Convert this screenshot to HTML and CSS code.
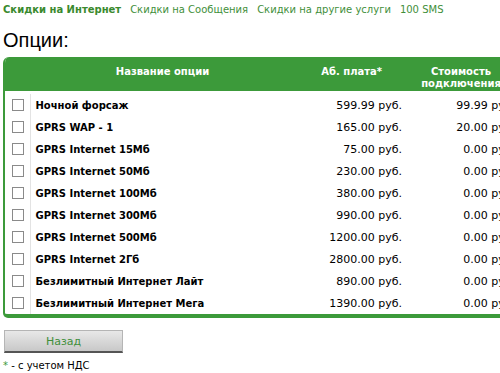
FILE: index.html
```html
<!DOCTYPE html>
<html lang="ru">
<head>
    <meta charset="UTF-8">
    <title>Опции</title>
    <link rel="stylesheet" href="styles.css">
</head>
<body>
    <div class="tabs">
        <a class="tab active" href="#">Скидки на Интернет</a>
        <a class="tab" href="#">Скидки на Сообщения</a>
        <a class="tab" href="#">Скидки на другие услуги</a>
        <a class="tab" href="#">100 SMS</a>
    </div>

    <h1>Опции:</h1>

    <div class="options-box">
        <table class="options">
            <colgroup>
                <col class="w-check">
                <col class="w-name">
                <col class="w-fee">
                <col class="w-conn">
            </colgroup>
            <thead>
                <tr>
                    <th class="col-check"></th>
                    <th class="col-name">Название опции</th>
                    <th class="col-fee">Аб. плата*</th>
                    <th class="col-conn">Стоимость подключения</th>
                </tr>
            </thead>
            <tbody>
                <tr><td class="col-check"><span class="box"></span></td><td class="col-name">Ночной форсаж</td><td class="col-fee">599.99 руб.</td><td class="col-conn">99.99 руб.</td></tr>
                <tr><td class="col-check"><span class="box"></span></td><td class="col-name">GPRS WAP - 1</td><td class="col-fee">165.00 руб.</td><td class="col-conn">20.00 руб.</td></tr>
                <tr><td class="col-check"><span class="box"></span></td><td class="col-name">GPRS Internet 15Мб</td><td class="col-fee">75.00 руб.</td><td class="col-conn">0.00 руб.</td></tr>
                <tr><td class="col-check"><span class="box"></span></td><td class="col-name">GPRS Internet 50Мб</td><td class="col-fee">230.00 руб.</td><td class="col-conn">0.00 руб.</td></tr>
                <tr><td class="col-check"><span class="box"></span></td><td class="col-name">GPRS Internet 100Мб</td><td class="col-fee">380.00 руб.</td><td class="col-conn">0.00 руб.</td></tr>
                <tr><td class="col-check"><span class="box"></span></td><td class="col-name">GPRS Internet 300Мб</td><td class="col-fee">990.00 руб.</td><td class="col-conn">0.00 руб.</td></tr>
                <tr><td class="col-check"><span class="box"></span></td><td class="col-name">GPRS Internet 500Мб</td><td class="col-fee">1200.00 руб.</td><td class="col-conn">0.00 руб.</td></tr>
                <tr><td class="col-check"><span class="box"></span></td><td class="col-name">GPRS Internet 2Гб</td><td class="col-fee">2800.00 руб.</td><td class="col-conn">0.00 руб.</td></tr>
                <tr><td class="col-check"><span class="box"></span></td><td class="col-name">Безлимитный Интернет Лайт</td><td class="col-fee">890.00 руб.</td><td class="col-conn">0.00 руб.</td></tr>
                <tr><td class="col-check"><span class="box"></span></td><td class="col-name">Безлимитный Интернет Мега</td><td class="col-fee">1390.00 руб.</td><td class="col-conn">0.00 руб.</td></tr>
            </tbody>
        </table>
    </div>

    <button class="back-btn">Назад</button>

    <div class="note"><span class="star">*</span> - с учетом НДС</div>
</body>
</html>
```

FILE: styles.css
```css
html {
    overflow: hidden;
}
body {
    font-family: "DejaVu Sans", Verdana, sans-serif;
    font-size: 10px;
    color: #000;
    background: #fff;
    margin: 0;
    padding: 3px 0 0 3px;
    width: 560px;
    overflow: hidden;
}
.tabs {
    display: flex;
    gap: 9px;
    height: 14px;
    line-height: 14px;
}
.tab {
    color: #3f8f3a;
    text-decoration: none;
}
.tab.active {
    font-weight: bold;
    color: #3a8a2e;
}
h1 {
    font-family: "Liberation Sans", Arial, sans-serif;
    font-weight: normal;
    font-size: 20px;
    margin: 11px 0 0 0;
    line-height: 24px;
    height: 29px;
}
.options-box {
    width: 512px;
    border-left: 2px solid #3c9a3a;
    border-bottom: 4px solid #3c9a3a;
    border-radius: 6px 0 0 5px;
    overflow: hidden;
}
.options {
    width: 510px;
    table-layout: fixed;
    border-collapse: collapse;
}
.w-check { width: 25px; }
.w-name { width: 265px; }
.w-fee { width: 112px; }
.w-conn { width: 108px; }

.options th {
    background: #3c9a3a;
    color: #fff;
    font-weight: bold;
    height: 25px;
    padding: 9px 0 0 0;
    line-height: 12px;
    vertical-align: top;
    border-bottom: 3px solid #fff;
    white-space: nowrap;
}
.options td {
    height: 22px;
    padding: 0;
    white-space: nowrap;
}
.options td.col-check {
    text-align: center;
    border-right: 1px solid #e3e3e3;
    padding-left: 1px;
}
.options th.col-name {
    text-align: center;
}
.options td.col-name {
    padding-left: 5px;
    font-weight: bold;
}
.options th.col-fee {
    text-align: right;
    padding-right: 25px;
}
.options td.col-fee {
    text-align: right;
    padding-right: 5px;
    font-size: 11px;
}
.options th.col-conn {
    text-align: center;
    white-space: normal;
}
.options td.col-conn {
    text-align: right;
    padding-right: 0;
    font-size: 11px;
}
.box {
    display: inline-block;
    width: 10px;
    height: 10px;
    border: 1px solid #8a8a8a;
    background: #fff;
    vertical-align: middle;
}
.back-btn {
    display: block;
    margin: 12px 0 0 1px;
    width: 119px;
    height: 23px;
    font-family: "DejaVu Sans", Verdana, sans-serif;
    font-size: 11px;
    color: #3f8f3a;
    background: linear-gradient(#e8e8e8, #c8c8c8);
    border: 1px solid #b5b5b5;
    border-bottom: 2px solid #555;
    padding: 0;
}
.note {
    margin-top: 6px;
    line-height: 14px;
}
.star {
    color: #3c9a3a;
}
```
